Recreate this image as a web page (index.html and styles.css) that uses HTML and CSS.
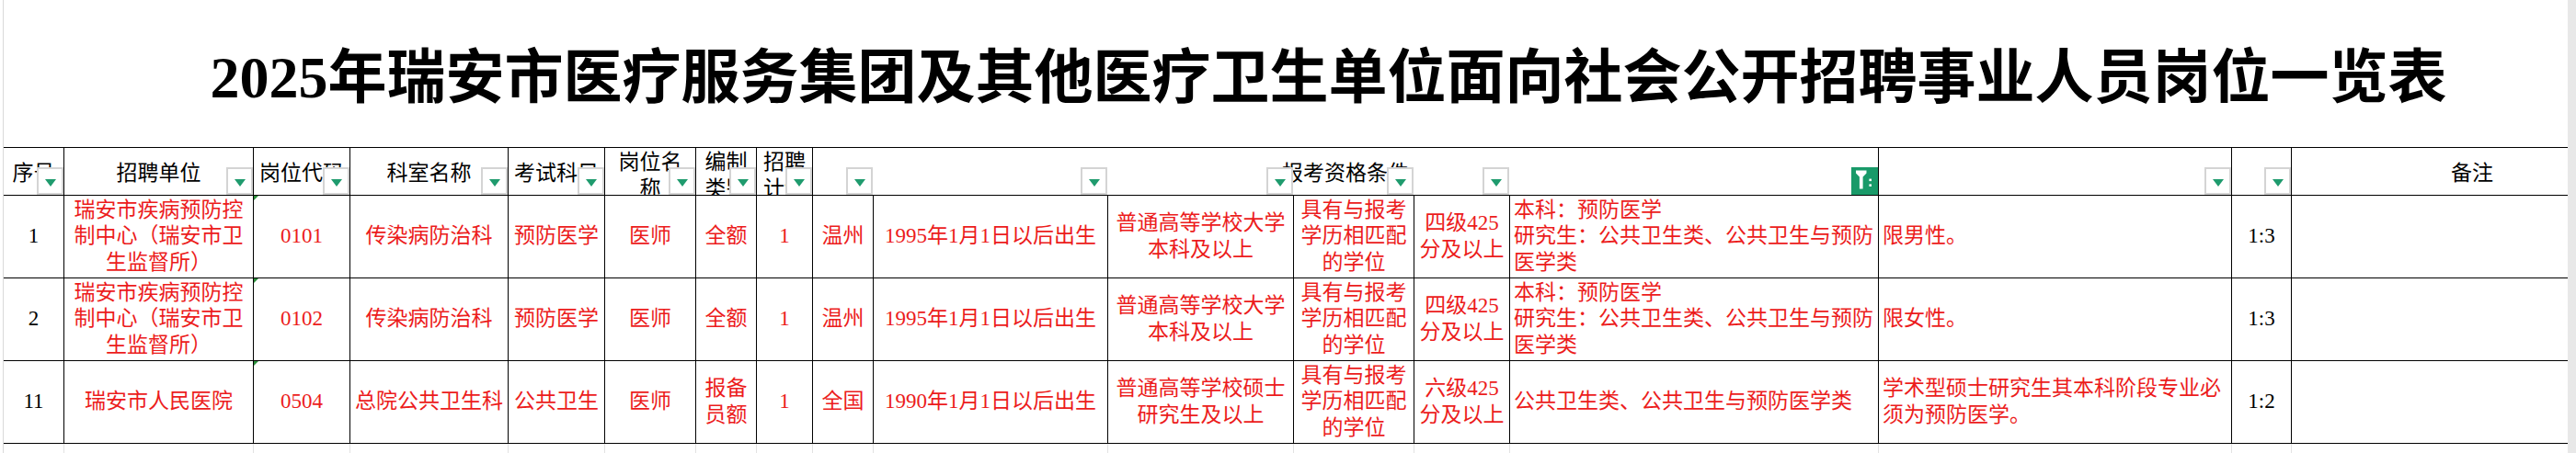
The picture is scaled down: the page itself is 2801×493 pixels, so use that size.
FILE: index.html
```html
<!DOCTYPE html>
<html lang="zh-CN">
<head>
<meta charset="utf-8">
<title>2025年瑞安市医疗服务集团及其他医疗卫生单位面向社会公开招聘事业人员岗位一览表</title>
<link rel="stylesheet" href="styles.css">
</head>
<body>
<div class="screen">
  <div class="sheet">
    <div class="inner">
      <div class="title">2025年瑞安市医疗服务集团及其他医疗卫生单位面向社会公开招聘事业人员岗位一览表</div>

      <div class="grid head">
        <div class="hc k1">序号</div>
        <div class="hc k2">招聘单位</div>
        <div class="hc k3">岗位代码</div>
        <div class="hc k4">科室名称</div>
        <div class="hc k5">考试科目</div>
        <div class="hc k6 two">岗位名<br>称</div>
        <div class="hc k7 two">编制<br>类别</div>
        <div class="hc k8 two">招聘<br>计划</div>
        <div class="hc kspan">报考资格条件</div>
        <div class="hc k15"></div>
        <div class="hc k16"></div>
        <div class="hc k17">备注</div>

        <div class="fb k1"></div>
        <div class="fb k2"></div>
        <div class="fb k3"></div>
        <div class="fb k4"></div>
        <div class="fb k5"></div>
        <div class="fb k6"></div>
        <div class="fb k7"></div>
        <div class="fb k8"></div>
        <div class="fb k9"></div>
        <div class="fb k10"></div>
        <div class="fb k11"></div>
        <div class="fb k12"></div>
        <div class="fb k13"></div>
        <div class="fb on k14">
          <svg class="funnel" width="25" height="26" viewBox="0 0 25 26">
            <path d="M3 1.5H14.5V4.5L10.6 8.6V21.5H6.9V8.6L3 4.5Z" fill="#fff"/>
            <rect x="17.4" y="10.6" width="2.6" height="2.5" fill="#fff"/>
            <rect x="17.4" y="16.4" width="2.6" height="2.5" fill="#fff"/>
          </svg>
        </div>
        <div class="fb k15"></div>
        <div class="fb k16"></div>
      </div>

      <div class="grid row">
        <div class="dc blk">1</div>
        <div class="dc">瑞安市疾病预防控<br>制中心（瑞安市卫<br>生监督所）</div>
        <div class="dc code">0101</div>
        <div class="dc">传染病防治科</div>
        <div class="dc">预防医学</div>
        <div class="dc">医师</div>
        <div class="dc">全额</div>
        <div class="dc">1</div>
        <div class="dc">温州</div>
        <div class="dc">1995年1月1日以后出生</div>
        <div class="dc">普通高等学校大学<br>本科及以上</div>
        <div class="dc">具有与报考<br>学历相匹配<br>的学位</div>
        <div class="dc">四级425<br>分及以上</div>
        <div class="dc left">本科：预防医学<br>研究生：公共卫生类、公共卫生与预防<br>医学类</div>
        <div class="dc left">限男性。</div>
        <div class="dc blk">1:3</div>
        <div class="dc"></div>
      </div>

      <div class="grid row">
        <div class="dc blk">2</div>
        <div class="dc">瑞安市疾病预防控<br>制中心（瑞安市卫<br>生监督所）</div>
        <div class="dc code">0102</div>
        <div class="dc">传染病防治科</div>
        <div class="dc">预防医学</div>
        <div class="dc">医师</div>
        <div class="dc">全额</div>
        <div class="dc">1</div>
        <div class="dc">温州</div>
        <div class="dc">1995年1月1日以后出生</div>
        <div class="dc">普通高等学校大学<br>本科及以上</div>
        <div class="dc">具有与报考<br>学历相匹配<br>的学位</div>
        <div class="dc">四级425<br>分及以上</div>
        <div class="dc left">本科：预防医学<br>研究生：公共卫生类、公共卫生与预防<br>医学类</div>
        <div class="dc left">限女性。</div>
        <div class="dc blk">1:3</div>
        <div class="dc"></div>
      </div>

      <div class="grid row">
        <div class="dc blk">11</div>
        <div class="dc">瑞安市人民医院</div>
        <div class="dc code">0504</div>
        <div class="dc">总院公共卫生科</div>
        <div class="dc">公共卫生</div>
        <div class="dc">医师</div>
        <div class="dc">报备<br>员额</div>
        <div class="dc">1</div>
        <div class="dc">全国</div>
        <div class="dc">1990年1月1日以后出生</div>
        <div class="dc">普通高等学校硕士<br>研究生及以上</div>
        <div class="dc">具有与报考<br>学历相匹配<br>的学位</div>
        <div class="dc">六级425<br>分及以上</div>
        <div class="dc left">公共卫生类、公共卫生与预防医学类</div>
        <div class="dc left">学术型硕士研究生其本科阶段专业必<br>须为预防医学。</div>
        <div class="dc blk">1:2</div>
        <div class="dc"></div>
      </div>

      <div class="grid filler">
        <div class="fc"></div><div class="fc"></div><div class="fc"></div><div class="fc"></div>
        <div class="fc"></div><div class="fc"></div><div class="fc"></div><div class="fc"></div>
        <div class="fc"></div><div class="fc"></div><div class="fc"></div><div class="fc"></div>
        <div class="fc"></div><div class="fc"></div><div class="fc"></div><div class="fc"></div>
        <div class="fc"></div>
      </div>
    </div>
  </div>
  <div class="scrollbar"></div>
</div>
</body>
</html>
```

FILE: styles.css
```css
* { box-sizing: border-box; }

html, body {
  margin: 0;
  padding: 0;
  background: #fff;
}

body {
  font-family: "Liberation Serif", "Noto Sans CJK SC", serif;
  color: #000;
}

.screen {
  display: flex;
  width: 2801px;
  height: 493px;
  overflow: hidden;
}

.sheet {
  flex: 0 0 2792px;
  padding-left: 3px;
  overflow: hidden;
}

.inner {
  width: 2882px;
  min-height: 493px;
  border-left: 1px solid #d9d9d9;
}

.scrollbar {
  flex: 0 0 9px;
  background: #e8e8e8;
}

.title {
  height: 160px;
  display: flex;
  align-items: center;
  justify-content: center;
  padding-top: 10px;
  font-size: 64px;
  font-weight: 700;
  line-height: 1;
  white-space: nowrap;
}

.grid {
  display: grid;
  grid-template-columns: 66px 206px 105px 172px 105px 99px 66px 61px 66px 255px 202px 131px 104px 401px 384px 65px 393px;
}

.head {
  border-top: 1px solid #000;
  grid-template-rows: 52px;
}

.row { grid-template-rows: 90px; }

.filler { grid-template-rows: 40px; }

.hc {
  grid-row: 1;
  border-right: 1px solid #000;
  border-bottom: 1px solid #000;
  display: flex;
  align-items: center;
  justify-content: center;
  text-align: center;
  font-size: 23px;
  line-height: 29px;
  overflow: hidden;
  white-space: nowrap;
  padding-top: 3px;
}

.hc.two { padding-top: 9px; }

.k1 { grid-column: 1; }
.k2 { grid-column: 2; }
.k3 { grid-column: 3; }
.k4 { grid-column: 4; }
.k5 { grid-column: 5; }
.k6 { grid-column: 6; }
.k7 { grid-column: 7; }
.k8 { grid-column: 8; }
.k9 { grid-column: 9; }
.k10 { grid-column: 10; }
.k11 { grid-column: 11; }
.k12 { grid-column: 12; }
.k13 { grid-column: 13; }
.k14 { grid-column: 14; }
.k15 { grid-column: 15; }
.k16 { grid-column: 16; }
.k17 { grid-column: 17; }
.kspan { grid-column: 9 / span 6; }

.fb {
  grid-row: 1;
  align-self: end;
  justify-self: end;
  width: 29px;
  height: 30px;
  margin: 0 1px 1px 0;
  border: 2px solid #d4d4d4;
  background: #fff;
  display: flex;
  justify-content: center;
  align-items: center;
  z-index: 1;
}

.fb::after {
  content: "";
  width: 0;
  height: 0;
  border-left: 6.5px solid transparent;
  border-right: 6.5px solid transparent;
  border-top: 8px solid #1f9b6e;
  margin-top: 3px;
}

.fb.on {
  background: #199a69;
  border-color: #199a69;
}

.fb.on::after { display: none; }

.funnel { display: block; }

.dc {
  border-right: 1px solid #000;
  border-bottom: 1px solid #000;
  display: flex;
  align-items: center;
  justify-content: center;
  text-align: center;
  font-size: 23px;
  line-height: 28.5px;
  color: #ec1c1c;
  overflow: hidden;
  white-space: nowrap;
}

.dc.blk { color: #000; }

.dc.left {
  justify-content: flex-start;
  text-align: left;
  padding-left: 4px;
}

.dc.code { position: relative; }

.dc.code::before {
  content: "";
  position: absolute;
  top: 0;
  left: 0;
  width: 0;
  height: 0;
  border-top: 5px solid #2b8f3b;
  border-right: 5px solid transparent;
}

.fc { border-right: 1px solid #e2e2e2; }
```
